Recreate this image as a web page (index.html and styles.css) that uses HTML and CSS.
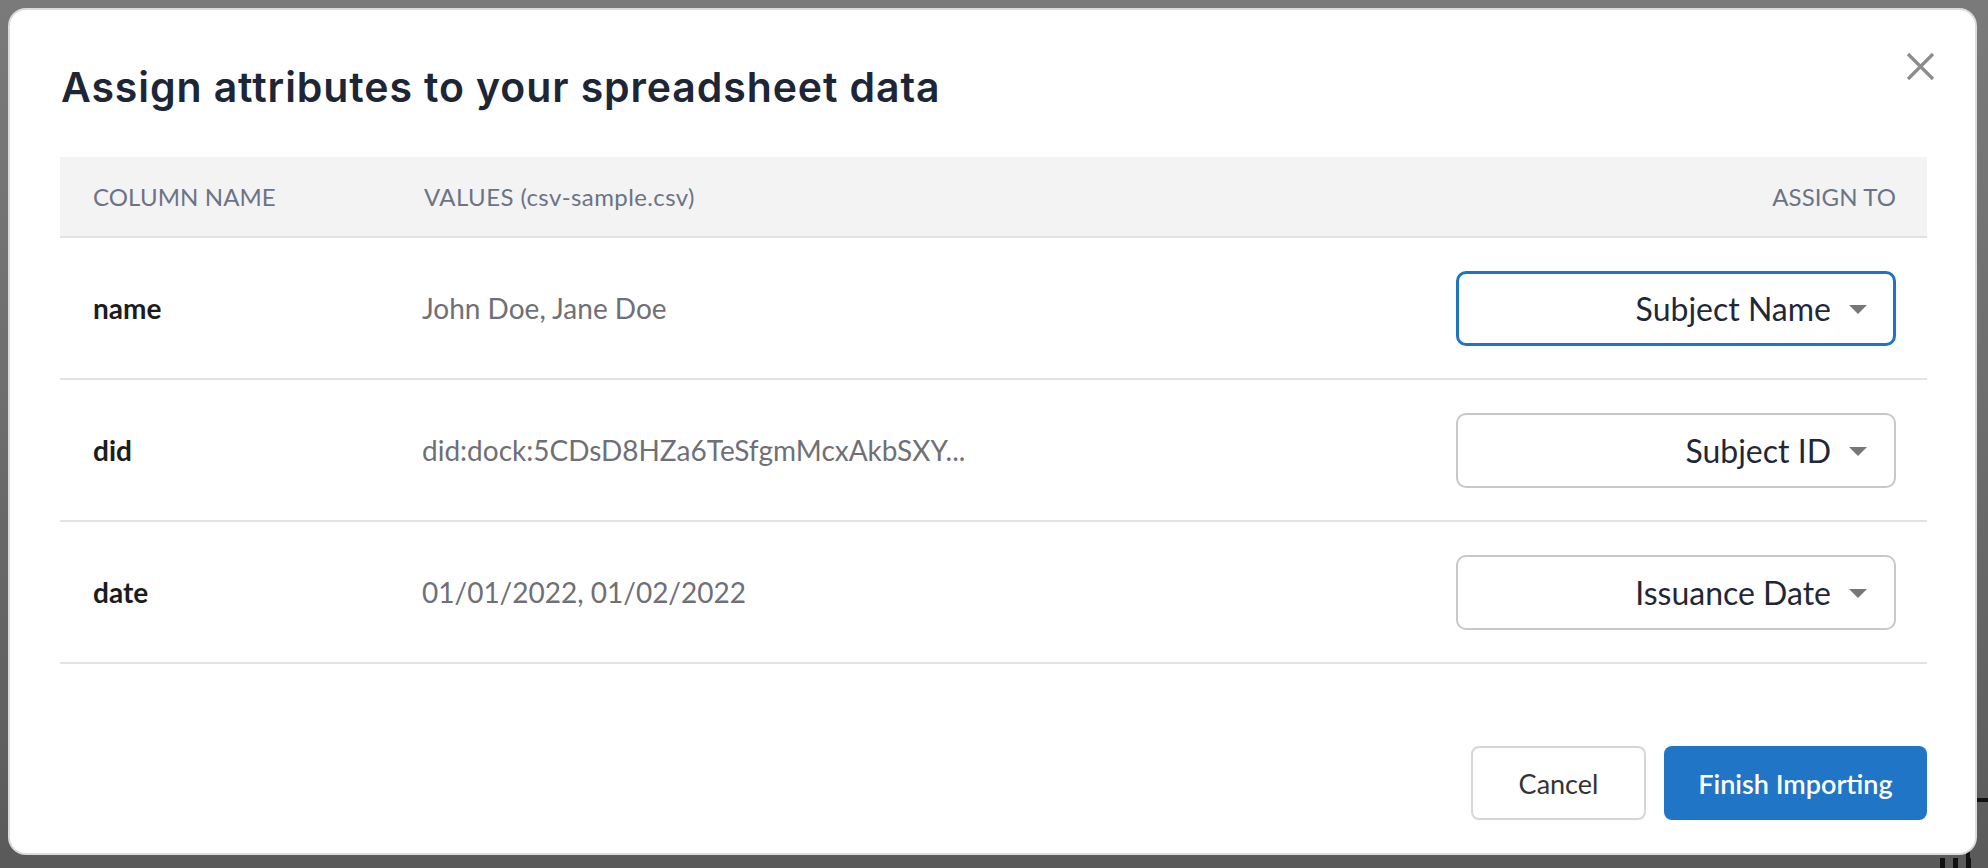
FILE: index.html
```html
<!DOCTYPE html>
<html lang="en">
<head>
<meta charset="utf-8">
<title>Assign attributes</title>
<link rel="stylesheet" href="styles.css">
</head>
<body>
<div class="backdrop-mark"></div>
<div class="backdrop-glyphs"><span></span><span></span><span></span></div>
<div class="modal">
  <button class="close" aria-label="Close">
    <svg viewBox="0 0 29 29" width="29" height="29"><path d="M2 2 L27 27 M27 2 L2 27" stroke="#8c8c8c" stroke-width="3.2" fill="none"/></svg>
  </button>
  <h1 class="title">Assign attributes to your spreadsheet data</h1>
  <div class="table">
    <div class="row head">
      <div class="cell c1">COLUMN NAME</div>
      <div class="cell c2">VALUES (csv-sample.csv)</div>
      <div class="cell c3">ASSIGN TO</div>
    </div>
    <div class="row">
      <div class="cell c1 key">name</div>
      <div class="cell c2 val">John Doe, Jane Doe</div>
      <div class="cell c3"><div class="select focused"><span>Subject Name</span><i class="caret"></i></div></div>
    </div>
    <div class="row">
      <div class="cell c1 key">did</div>
      <div class="cell c2 val">did:dock:5CDsD8HZa6TeSfgmMcxAkbSXY...</div>
      <div class="cell c3"><div class="select"><span>Subject ID</span><i class="caret"></i></div></div>
    </div>
    <div class="row">
      <div class="cell c1 key">date</div>
      <div class="cell c2 val">01/01/2022, 01/02/2022</div>
      <div class="cell c3"><div class="select"><span>Issuance Date</span><i class="caret"></i></div></div>
    </div>
  </div>
  <div class="footer">
    <button class="btn cancel">Cancel</button>
    <button class="btn primary">Finish Importing</button>
  </div>
</div>
</body>
</html>
```
FILE: styles.css
```css
html, body {
  margin: 0;
  padding: 0;
}
body {
  width: 1988px;
  height: 868px;
  overflow: hidden;
  box-sizing: border-box;
  padding: 10px 0 0 10px;
  background: linear-gradient(180deg, #7a7a7a 0%, #6e6e6e 45%, #5a5a5a 100%);
  font-family: "Lato", "Liberation Sans", sans-serif;
  position: relative;
}
.backdrop-mark {
  position: absolute;
  left: 1966px;
  top: 798px;
  width: 40px;
  height: 90px;
  border-left: 4px solid #111;
  border-top: 4px solid #111;
  box-sizing: border-box;
}
.backdrop-glyphs {
  position: absolute;
  left: 1940px;
  top: 858px;
  display: flex;
  gap: 8px;
}
.backdrop-glyphs span {
  display: block;
  width: 5px;
  height: 12px;
  background: #111;
}
.modal {
  position: relative;
  z-index: 2;
  width: 1965px;
  height: 843px;
  box-sizing: border-box;
  background: #fff;
  border-radius: 16px;
  box-shadow: 0 0 0 2px #dcdcdc;
  padding: 0 48px 33px 50px;
  display: flex;
  flex-direction: column;
}
.close {
  position: absolute;
  top: 42px;
  right: 40px;
  width: 29px;
  height: 29px;
  padding: 0;
  border: 0;
  background: none;
  cursor: pointer;
}
.close svg { display: block; }
.title {
  margin: 53px 0 46px 1px;
  font-family: "Inter", "Liberation Sans", sans-serif;
  font-weight: 600;
  font-size: 41px;
  line-height: 48px;
  color: #1d2636;
  letter-spacing: 0.9px;
}
.table {
  display: flex;
  flex-direction: column;
}
.row {
  display: grid;
  grid-template-columns: 331px 1fr 440px;
  align-items: center;
  height: 142px;
  box-sizing: border-box;
  padding: 0 31px 0 33px;
  border-bottom: 2px solid #e2e2e2;
}
.row.head {
  height: 81px;
  background: #f3f3f3;
  font-size: 24px;
  color: #6b7386;
  letter-spacing: 0.1px;
}
.head .c2 { letter-spacing: 0.4px; }
.c3 {
  display: flex;
  justify-content: flex-end;
}
.key {
  font-size: 28px;
  font-weight: 700;
  color: #1c1c1c;
}
.val {
  font-size: 28px;
  color: #6f6f77;
  margin-left: -2px;
}
.select {
  width: 440px;
  height: 75px;
  box-sizing: border-box;
  border: 2px solid #c8c8c8;
  border-radius: 10px;
  display: flex;
  align-items: center;
  justify-content: flex-end;
  gap: 18px;
  padding-right: 27px;
  font-size: 32px;
  color: #1f2838;
}
.select.focused {
  border: 3px solid #1f74c4;
  padding-right: 26px;
}
.caret {
  display: block;
  width: 0;
  height: 0;
  border-left: 9px solid transparent;
  border-right: 9px solid transparent;
  border-top: 9px solid #777;
  margin-top: 2px;
}
.footer {
  margin-top: auto;
  display: flex;
  justify-content: flex-end;
  gap: 18px;
}
.btn {
  height: 74px;
  box-sizing: border-box;
  border-radius: 8px;
  font-family: "Lato", "Liberation Sans", sans-serif;
  font-size: 27px;
  cursor: pointer;
}
.cancel {
  width: 175px;
  background: #fff;
  border: 2px solid #d6d6d6;
  color: #333;
}
.primary {
  width: 263px;
  background: #2075c7;
  border: 0;
  color: #fff;
  font-weight: 600;
}
```
